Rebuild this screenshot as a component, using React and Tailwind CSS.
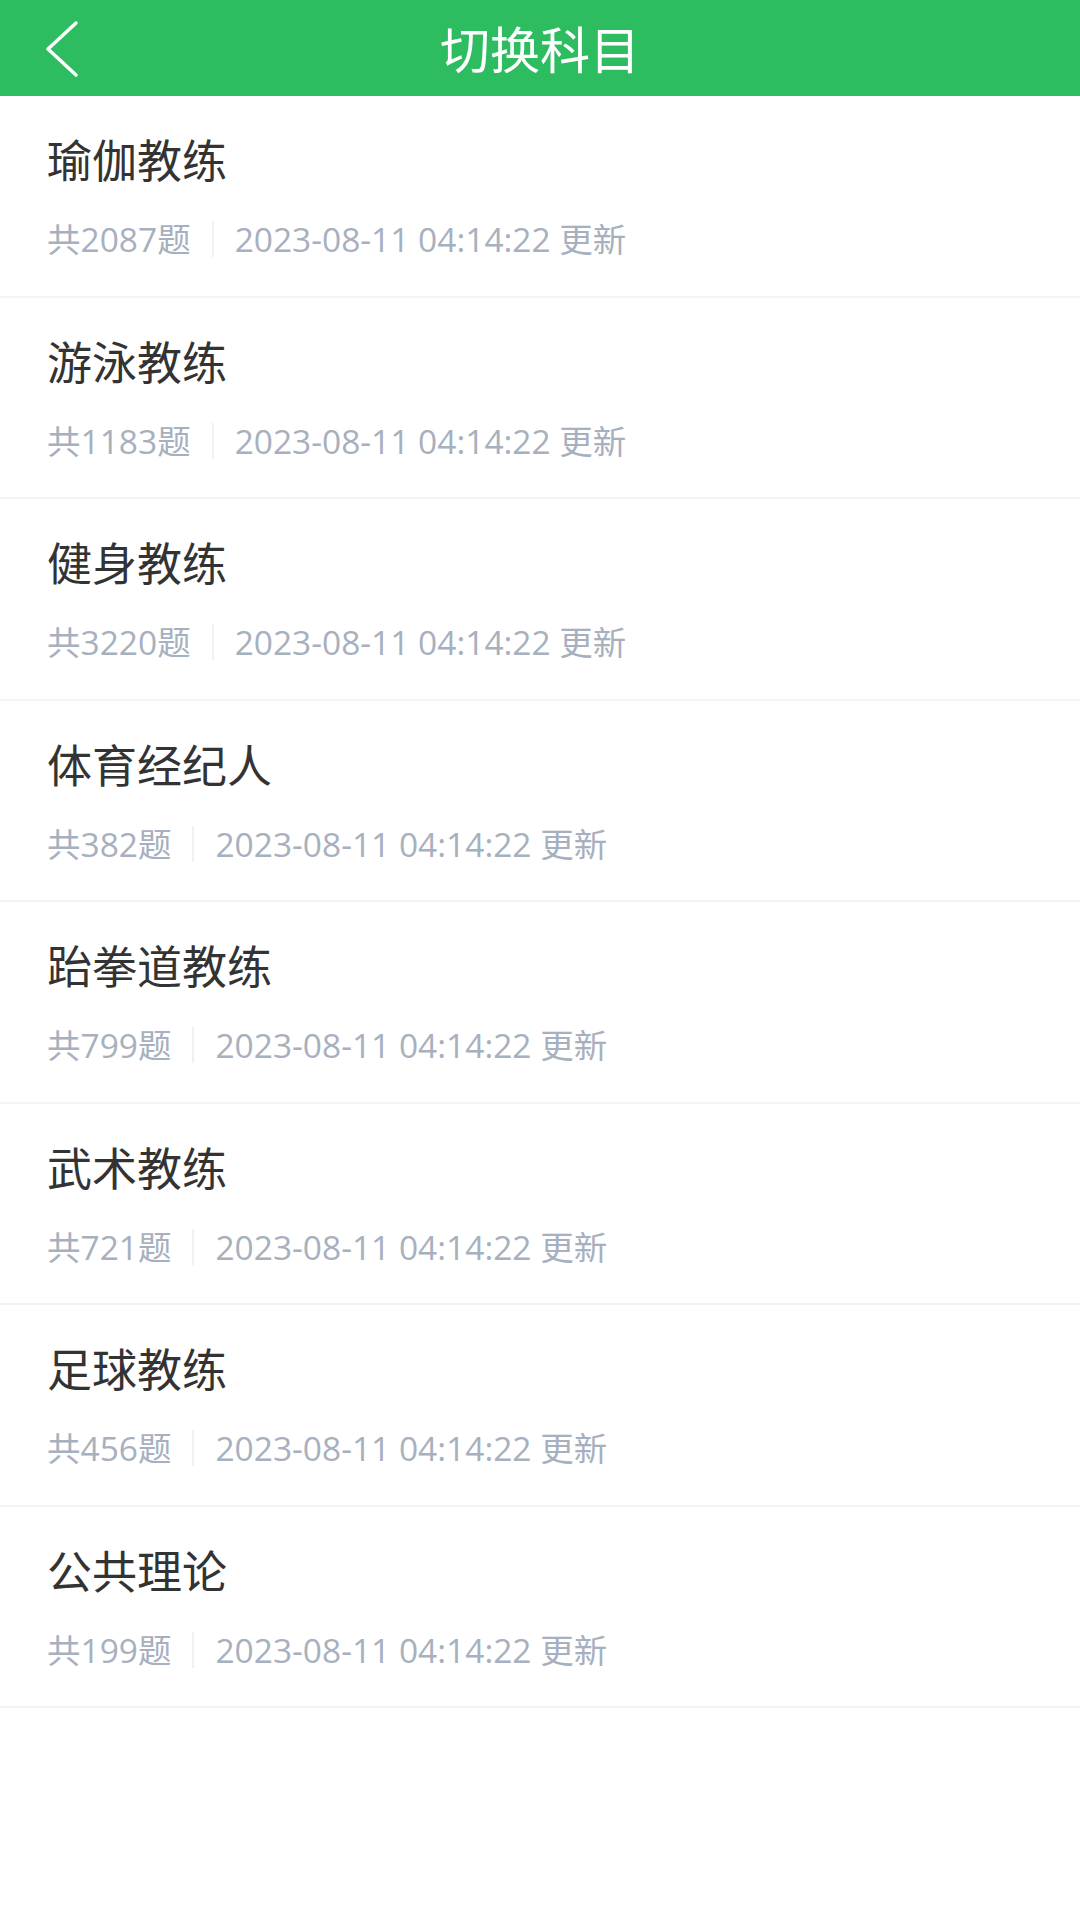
import React from "react"

const SUBJECTS = [
  { name: "瑜伽教练", count: 2087 },
  { name: "游泳教练", count: 1183 },
  { name: "健身教练", count: 3220 },
  { name: "体育经纪人", count: 382 },
  { name: "跆拳道教练", count: 799 },
  { name: "武术教练", count: 721 },
  { name: "足球教练", count: 456 },
  { name: "公共理论", count: 199 },
]

const FONT = { fontFamily: '"Open Sans", "Noto Sans CJK SC", sans-serif' }

function SubjectRow({ name, count }) {
  return (
    <div className="flex h-[201.5px] flex-col border-b-2 border-[#f3f3f3] pl-[47px]">
      <div className="mt-[41px] text-[45px] leading-[48px] text-[#333333]">{name}</div>
      <div className="mt-[34px] flex items-center text-[33.5px] leading-[40px] text-[#a7b0be]">
        <span>共{count}题</span>
        <span className="mx-[21px] h-[36px] w-[2px] bg-[#f1f1f3]" />
        <span>2023-08-11 04:14:22 更新</span>
      </div>
    </div>
  )
}

export default function App() {
  return (
    <div className="min-h-[1920px] w-[1080px] bg-white" style={FONT}>
      <div className="relative flex h-[96px] items-center justify-center bg-[#2dbd60]">
        <button className="absolute left-[40px] top-[18px] h-[60px] w-[40px]">
          <svg width="40" height="60" viewBox="0 0 40 60" fill="none">
            <path d="M36 5 L8 31 L36 57" stroke="white" strokeWidth="3.5" strokeLinecap="round" strokeLinejoin="round" />
          </svg>
        </button>
        <div className="pt-[4px] text-[50px] leading-none text-white">切换科目</div>
      </div>
      {SUBJECTS.map((s) => (
        <SubjectRow key={s.name} name={s.name} count={s.count} />
      ))}
    </div>
  )
}
